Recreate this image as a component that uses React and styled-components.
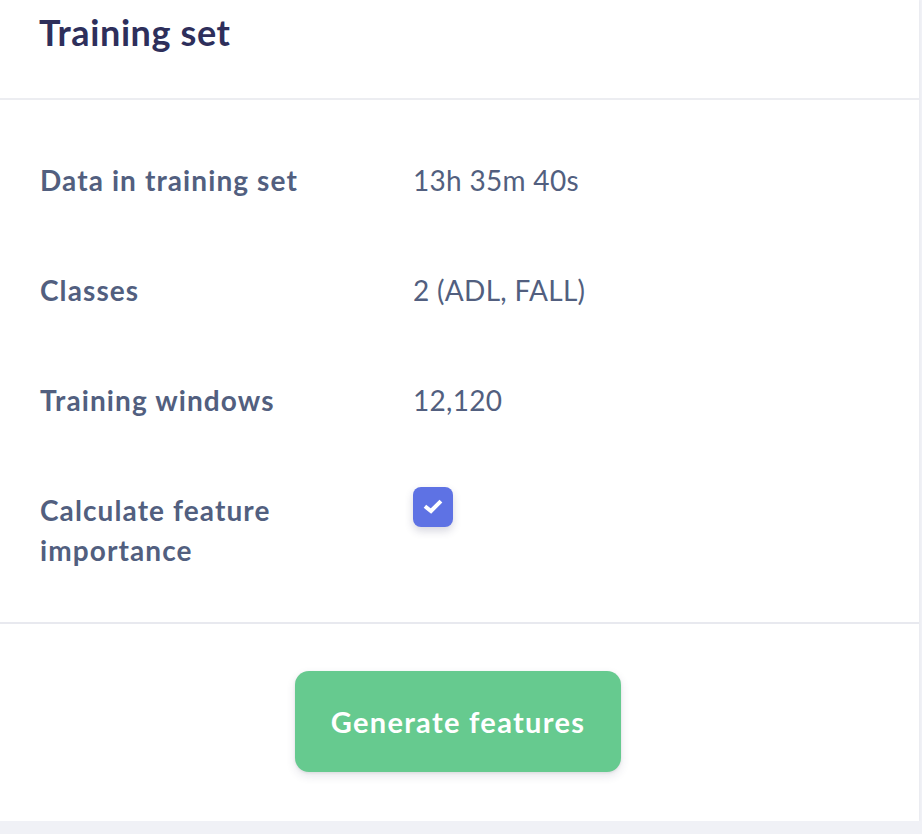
import React from 'react';
import styled, { createGlobalStyle } from 'styled-components';

const GlobalStyle = createGlobalStyle`
  html, body {
    margin: 0;
    padding: 0;
    background: #f0f1f6;
    font-family: Lato, "Open Sans", sans-serif;
  }
`

const Card = styled.div`
  width: 919px;
  background: #fff;
  box-shadow: 0 0 3px rgba(0, 0, 0, 0.06);
`

const Header = styled.div`
  height: 100px;
  padding: 0 39px;
  box-sizing: border-box;
  border-bottom: 2px solid #ecedf1;
`

const Title = styled.h2`
  margin: 0;
  padding-top: 10px;
  font-size: 36px;
  line-height: 44px;
  font-weight: 700;
  letter-spacing: 0.6px;
  color: #2e2f5b;
`

const Body = styled.div`
  padding: 60px 40px 52px;
  display: flex;
  flex-direction: column;
  gap: 70px;
  border-bottom: 2px solid #e8e9ef;
`

const Row = styled.div`
  display: grid;
  grid-template-columns: 373px 1fr;
  align-items: start;
`

const Label = styled.div`
  font-size: 28px;
  line-height: 40px;
  font-weight: 700;
  letter-spacing: 1.1px;
  color: #525f7f;
  max-width: 285px;
`

const Value = styled.div`
  font-size: 28px;
  line-height: 40px;
  letter-spacing: 0.3px;
  color: #525f7f;
`

const Check = styled.div`
  width: 40px;
  height: 40px;
  margin-top: -3px;
  border-radius: 8px;
  background: #5e72e4;
  box-shadow: 0 4px 8px rgba(50, 50, 93, 0.2);
  display: flex;
  align-items: center;
  justify-content: center;
`

const Footer = styled.div`
  display: flex;
  justify-content: center;
  padding: 47px 3px 49px 0;
`

const Button = styled.button`
  width: 326px;
  height: 101px;
  border: none;
  border-radius: 14px;
  background: #66ca8f;
  color: #fff;
  font-family: inherit;
  font-size: 29px;
  font-weight: 700;
  letter-spacing: 1.3px;
  box-shadow: 0 4px 10px rgba(50, 50, 93, 0.12), 0 1px 3px rgba(0, 0, 0, 0.08);
  cursor: pointer;
`

const rows = [
  ['Data in training set', '13h 35m 40s'],
  ['Classes', '2 (ADL, FALL)'],
  ['Training windows', '12,120'],
]

export default function App() {
  return (
    <>
      <GlobalStyle />
      <Card>
        <Header>
          <Title>Training set</Title>
        </Header>
        <Body>
          {rows.map(([label, value]) => (
            <Row key={label}>
              <Label>{label}</Label>
              <Value>{value}</Value>
            </Row>
          ))}
          <Row>
            <Label>Calculate feature importance</Label>
            <div>
              <Check>
                <svg width="20" height="18" viewBox="0 0 20 18">
                  <path d="M3.5 9.5 L8 13 L16.5 4.5" fill="none" stroke="#fff" strokeWidth="4" strokeLinecap="square" />
                </svg>
              </Check>
            </div>
          </Row>
        </Body>
        <Footer>
          <Button>Generate features</Button>
        </Footer>
      </Card>
    </>
  )
}
